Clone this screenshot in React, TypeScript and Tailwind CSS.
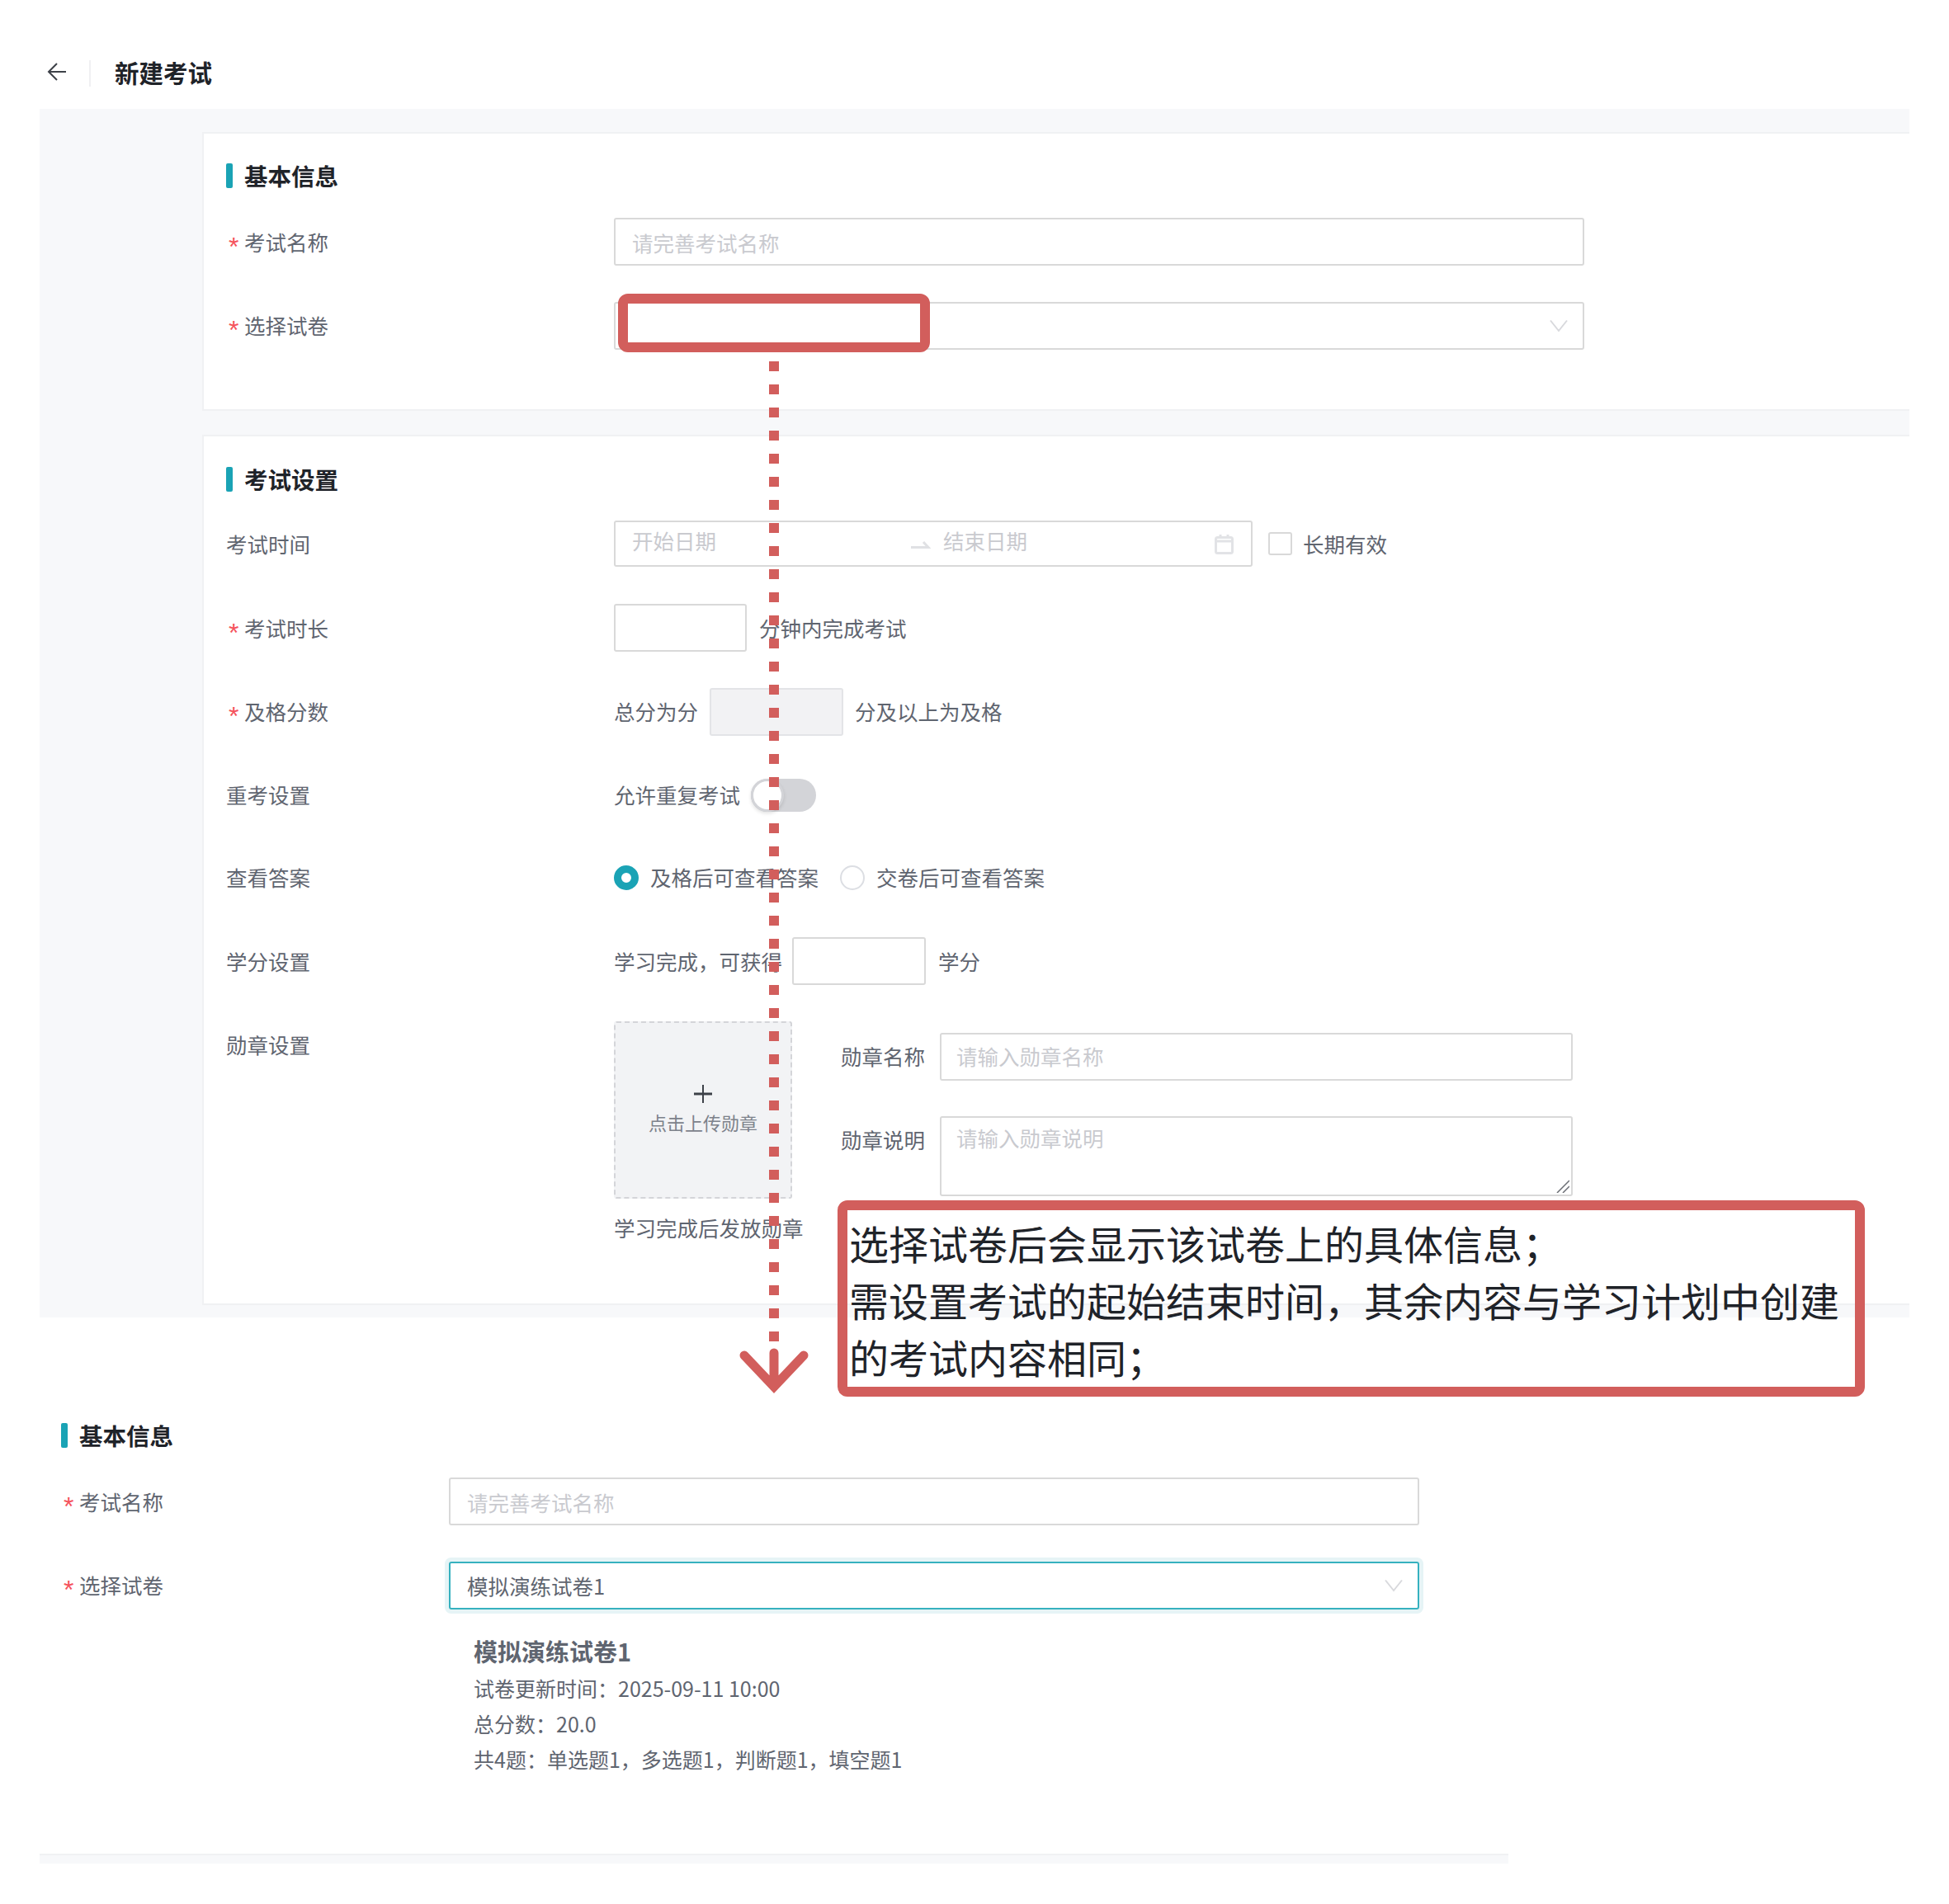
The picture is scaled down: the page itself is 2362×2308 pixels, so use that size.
import type { ReactNode } from "react";

// --- colores compartidos como clases fijas ---
const labelText = "text-[25.5px] leading-none text-[#5f6570]";
const liftedText = "text-[25.5px] leading-none text-[#5f6570] pb-[3px]";
const inputBase =
  "h-[58px] border-2 border-[#d9d9d9] rounded-[3px] bg-white pl-[20px] text-[25.5px] outline-none placeholder:text-[#c9cacf]";

const Label = ({ required, lifted, children }: { required?: boolean; lifted?: boolean; children: ReactNode }) => (
  <div className={`w-[470px] shrink-0 flex items-center ${lifted ? liftedText : labelText}`}>
    {required && (
      <span className="w-[22px] pl-[3px] text-[32px] text-[#f5525c] font-['Liberation_Sans'] translate-y-[6px]">*</span>
    )}
    <span>{children}</span>
  </div>
);

const SectionTitle = ({ children }: { children: ReactNode }) => (
  <div className="flex items-center h-[30px]">
    <div className="w-[8px] h-[30px] rounded-[2px] bg-[#1aa3b5]" />
    <div className="ml-[14px] text-[28.5px] leading-none font-bold text-[#1f2329]">{children}</div>
  </div>
);

const Chevron = () => (
  <svg width="22" height="16" viewBox="0 0 22 16" className="absolute right-[18px] top-[19px]">
    <path d="M1 1.5 L11 14 L21 1.5" fill="none" stroke="#d8d9dd" strokeWidth="2" />
  </svg>
);

const Row = ({ className, children }: { className?: string; children: ReactNode }) => (
  <div className={`flex items-center h-[56px] ${className ?? ""}`}>{children}</div>
);

const BasicInfo = ({ focused }: { focused?: boolean }) => (
  <>
    <SectionTitle>基本信息</SectionTitle>
    <div className="flex items-center mt-[36px]">
      <Label required>考试名称</Label>
      <input className={`w-[1176px] ${inputBase}`} placeholder="请完善考试名称" />
    </div>
    <div className="flex items-center mt-[44px]">
      <Label required lifted>选择试卷</Label>
      <div
        className={
          focused
            ? "relative w-[1176px] h-[58px] border-2 border-[#36b1bf] rounded-[3px] ring-[5px] ring-[#e6f4f6] flex items-center pl-[20px] text-[25.5px] text-[#5f6570]"
            : "relative w-[1176px] h-[58px] border-2 border-[#d9d9d9] rounded-[3px]"
        }
      >
        {focused && "模拟演练试卷1"}
        <Chevron />
      </div>
    </div>
  </>
);

export default function App() {
  return (
    <div className="relative w-[2362px] h-[2308px] overflow-hidden bg-white font-['Noto_Sans_CJK_SC',sans-serif]">
      {/* cabecera */}
      <div className="h-[132px] pt-[46px] pl-[57px] flex items-center">
        <svg width="24" height="24" viewBox="0 0 24 24" className="mb-[4px]">
          <path d="M23 12 H2 M12 2 L2 12 L12 22" fill="none" stroke="#3d4148" strokeWidth="2" />
        </svg>
        <div className="ml-[27px] w-[2px] h-[32px] bg-[#f0f0f2]" />
        <div className="ml-[29px] pb-[2px] text-[29.5px] leading-none font-bold text-[#1f2329]">新建考试</div>
      </div>

      {/* formulario con fondo gris */}
      <div className="ml-[48px] w-[2266px] h-[1465px] pt-[28px] pl-[197px] bg-[#f7f8fa]">
        <div className="h-[338px] bg-white border-2 border-r-0 border-[#f0f1f3] pl-[27px] pt-[36px]">
          <BasicInfo />
        </div>

        <div className="mt-[29px] h-[1055px] bg-white border-2 border-r-0 border-[#f0f1f3] pl-[27px] pt-[37px]">
          <SectionTitle>考试设置</SectionTitle>

          <Row className="mt-[35px]">
            <Label>考试时间</Label>
            <div className="relative w-[774px] h-[56px] border-2 border-[#d9d9d9] rounded-[3px] text-[25.5px] leading-none text-[#c9cacf]">
              <span className="absolute left-[20px] top-[9px]">开始日期</span>
              <svg width="24" height="12" viewBox="0 0 24 12" className="absolute left-[358px] top-[22px]">
                <path d="M0 8.5 H21 L15 2" fill="none" stroke="#e0e1e4" strokeWidth="3" />
              </svg>
              <span className="absolute left-[397px] top-[9px]">结束日期</span>
              <svg width="23" height="24" viewBox="0 0 23 24" className="absolute right-[21px] top-[15px]">
                <rect x="1.5" y="3.5" width="20" height="19" rx="2" fill="none" stroke="#e2e3e6" strokeWidth="3" />
                <path d="M1.5 8 H21.5 M7 0 V4 M16 0 V4" fill="none" stroke="#e2e3e6" strokeWidth="3" />
              </svg>
            </div>
            <div className="ml-[19px] w-[29px] h-[28px] border-2 border-[#d9d9d9] rounded-[3px]" />
            <div className={`ml-[13px] ${labelText}`}>长期有效</div>
          </Row>

          <Row className="mt-[46px]">
            <Label required>考试时长</Label>
            <input className={`w-[161px] ${inputBase}`} />
            <div className={`ml-[15px] ${labelText}`}>分钟内完成考试</div>
          </Row>

          <Row className="mt-[46px]">
            <Label required lifted>及格分数</Label>
            <div className={liftedText}>总分为分</div>
            <div className="ml-[14px] w-[162px] h-[58px] border-2 border-[#e3e4e7] rounded-[3px] bg-[#f2f2f4]" />
            <div className={`ml-[14px] ${liftedText}`}>分及以上为及格</div>
          </Row>

          <Row className="mt-[45px]">
            <Label lifted>重考设置</Label>
            <div className={liftedText}>允许重复考试</div>
            <div className="ml-[13px] relative w-[79px] h-[40px] rounded-full bg-[#d3d4d8]">
              <div className="absolute left-0 top-0 w-[40px] h-[40px] rounded-full bg-white border-[3px] border-[#d3d4d8] shadow-[0_2px_4px_rgba(0,0,0,0.12)]" />
            </div>
          </Row>

          <Row className="mt-[44px]">
            <Label lifted>查看答案</Label>
            <div className="w-[30px] h-[30px] rounded-full border-[9px] border-[#1aa3b5] bg-white" />
            <div className={`ml-[14px] whitespace-nowrap ${liftedText}`}>及格后可查看答案</div>
            <div className="ml-[26px] w-[30px] h-[30px] rounded-full border-2 border-[#dcdee3] bg-white" />
            <div className={`ml-[14px] whitespace-nowrap ${liftedText}`}>交卷后可查看答案</div>
          </Row>

          <Row className="mt-[45px]">
            <Label>学分设置</Label>
            <div className={labelText}>学习完成，可获得</div>
            <input className={`ml-[12px] w-[162px] ${inputBase}`} />
            <div className={`ml-[15px] ${labelText}`}>学分</div>
          </Row>

          <div className="flex mt-[45px]">
            <div className="h-[58px] flex items-center">
              <Label lifted>勋章设置</Label>
            </div>
            <div className="w-[216px] shrink-0">
              <div className="h-[215px] border-2 border-dashed border-[#d4d5d9] rounded-[3px] bg-[#f2f3f5] flex flex-col items-center pt-[74px]">
                <svg width="24" height="24" viewBox="0 0 24 24">
                  <path d="M12 1 V23" fill="none" stroke="#3d4148" strokeWidth="2" />
                  <path d="M1 12 H23" fill="none" stroke="#3d4148" strokeWidth="3" />
                </svg>
                <div className="mt-[11px] text-[22px] leading-none text-[#7d828b]">点击上传勋章</div>
              </div>
              <div className={`mt-[22px] whitespace-nowrap ${labelText}`}>学习完成后发放勋章</div>
            </div>
            <div className="ml-[59px] pt-[14px]">
              <div className="flex items-center">
                <div className={`w-[120px] ${liftedText}`}>勋章名称</div>
                <input className={`w-[767px] pb-[3px] !pl-[18px] ${inputBase}`} placeholder="请输入勋章名称" />
              </div>
              <div className="relative flex mt-[43px]">
                <div className={`w-[120px] pt-[15px] ${labelText}`}>勋章说明</div>
                <textarea
                  className="w-[767px] h-[97px] resize-none border-2 border-[#d9d9d9] rounded-[3px] pl-[18px] pt-[11px] text-[25.5px] leading-none outline-none placeholder:text-[#c9cacf]"
                  placeholder="请输入勋章说明"
                />
                <svg width="16" height="16" viewBox="0 0 16 16" className="absolute right-[4px] bottom-[4px]">
                  <path d="M1 16 L16 1 M8 16 L16 8" fill="none" stroke="#6b6e75" strokeWidth="1.5" />
                </svg>
              </div>
            </div>
          </div>
        </div>
      </div>

      {/* segunda captura: examen seleccionado */}
      <div className="pl-[74px] pt-[128px]">
        <BasicInfo focused />
        <div className="ml-[500px] mt-[33px] text-[#5f6570]">
          <div className="text-[29px] leading-[34px] font-bold">模拟演练试卷1</div>
          <div className="mt-[7px] text-[25px] leading-[43px]">试卷更新时间：2025-09-11 10:00</div>
          <div className="text-[25px] leading-[43px]">总分数：20.0</div>
          <div className="text-[25px] leading-[43px]">共4题：单选题1，多选题1，判断题1，填空题1</div>
        </div>
      </div>
      <div className="absolute left-[48px] top-[2247px] w-[1780px] h-[12px] bg-[#f7f8fa] border-t-2 border-[#f0f1f3]" />

      {/* anotaciones en rojo encima de la captura */}
      <div className="absolute left-[749px] top-[356px] w-[378px] h-[71px] border-[12px] border-[#d25e5c] rounded-[12px] bg-white" />
      <svg width="100" height="1260" viewBox="0 0 100 1260" className="absolute left-[888px] top-[438px]">
        <path d="M50 0 V1188" fill="none" stroke="#d25e5c" strokeWidth="12" strokeDasharray="12 16" />
        <path
          d="M14 1205 L50 1243 L86 1205 M50 1202 V1243"
          fill="none"
          stroke="#d25e5c"
          strokeWidth="11"
          strokeLinecap="round"
        />
      </svg>
      <div className="absolute left-[1015px] top-[1455px] w-[1245px] h-[238px] border-[12px] border-[#d25e5c] rounded-[12px] pl-[2px] pt-[5px] text-[48px] leading-[69px] text-[#1f2329]">
        选择试卷后会显示该试卷上的具体信息；
        <br />
        需设置考试的起始结束时间，其余内容与学习计划中创建的考试内容相同；
      </div>
    </div>
  );
}
